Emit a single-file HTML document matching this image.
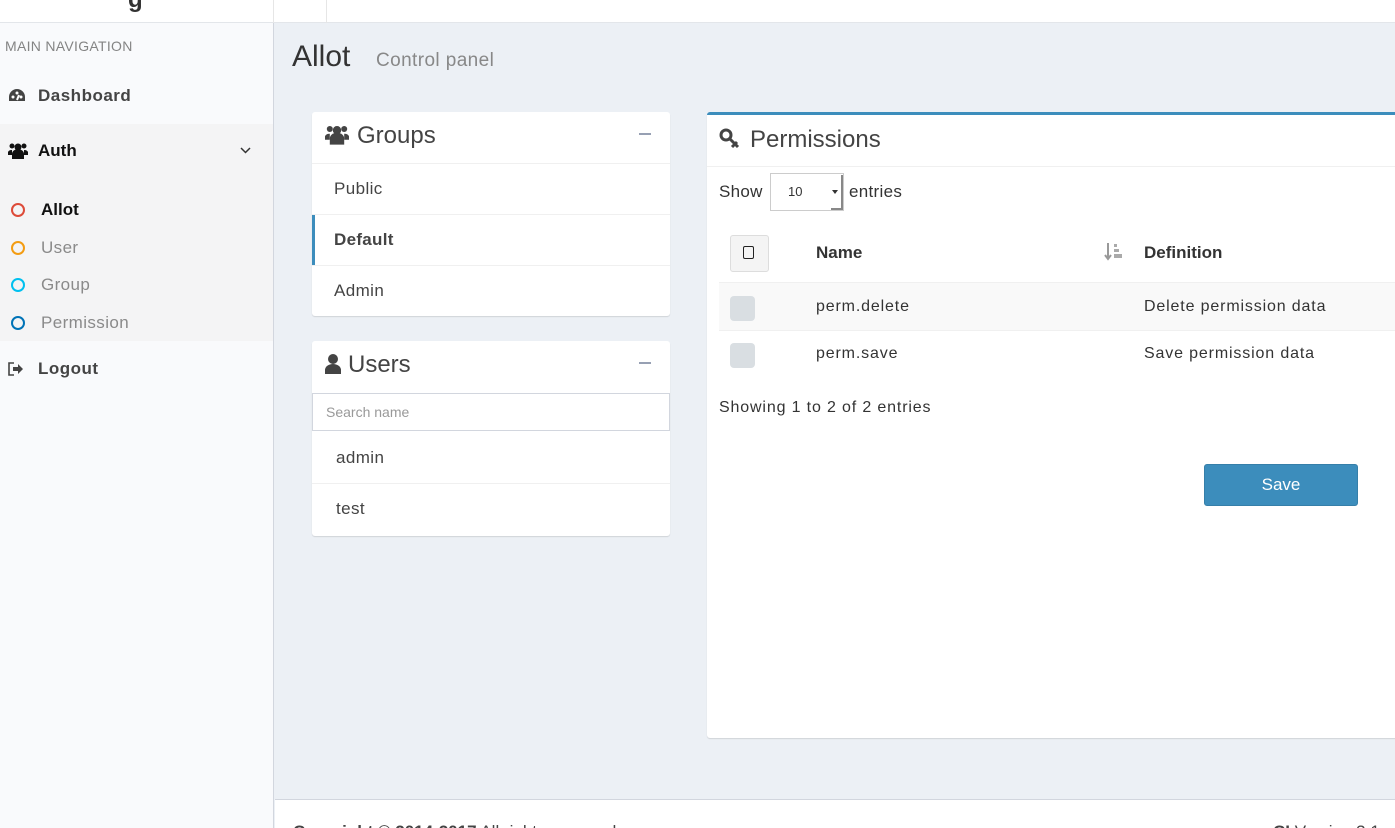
<!DOCTYPE html>
<html style="height:828px;overflow:hidden"><head><style>
*{box-sizing:border-box;margin:0;padding:0}
html{width:1395px;height:828px;overflow:hidden}
body{width:1395px;height:828px;overflow:hidden;font-family:"Liberation Sans",sans-serif;background:#ecf0f5;position:relative;color:#333}
.a{position:absolute}
.hdr{left:0;top:0;width:1395px;height:23px;background:#fff;border-bottom:1px solid #e3e6ea}
.side{left:0;top:23px;width:274px;height:805px;background:#f9fafc;border-right:1px solid #d2d6de}
.box{background:#fff;border-radius:3px;box-shadow:0 1px 1px rgba(0,0,0,.12)}
.circ{width:14px;height:14px;border-radius:50%;border:2px solid}
.t{letter-spacing:.85px}
</style></head><body>
<div class="a hdr"></div>
<div class="a" style="left:273px;top:0;width:1px;height:23px;background:#e6e6e6"></div>
<div class="a" style="left:326px;top:0;width:1px;height:23px;background:#e6e6e6"></div>
<div class="a" style="left:128px;top:-14px;font-size:24px;font-weight:bold;color:#333">g</div>
<div class="a side"></div>
<div class="a" style="left:5px;top:38px;font-size:14px;color:#848484;letter-spacing:.3px">MAIN NAVIGATION</div>
<svg class="a" style="left:8px;top:88px" width="18" height="16" viewBox="0 0 18 16"><path d="M9 1A8 8 0 0 0 1 9v4h16V9A8 8 0 0 0 9 1z" fill="#444"/><circle cx="5" cy="9" r="1.5" fill="#fff"/><circle cx="9" cy="5" r="1.5" fill="#fff"/><circle cx="13" cy="9" r="1.5" fill="#fff"/><path d="M9 12l2-5" stroke="#fff" stroke-width="2"/></svg>
<div class="a" style="left:38px;top:86px;font-size:17px;font-weight:bold;color:#444;letter-spacing:.5px">Dashboard</div>
<div class="a" style="left:0;top:124px;width:273px;height:217px;background:#f4f4f5"></div>
<svg class="a" style="left:8px;top:142px" width="20" height="18" viewBox="0 0 20 18"><circle cx="10" cy="5" r="3.5" fill="#111"/><circle cx="4" cy="4" r="2.5" fill="#111"/><circle cx="16" cy="4" r="2.5" fill="#111"/><path d="M4 17v-5a6 5 0 0 1 12 0v5z" fill="#111"/><path d="M0 13v-3a4 3 0 0 1 4-2v5zM20 13v-3a4 3 0 0 0-4-2v5z" fill="#111"/></svg>
<div class="a" style="left:38px;top:141px;font-size:17px;font-weight:bold;color:#111">Auth</div>
<svg class="a" style="left:240px;top:147px" width="11" height="8"><path d="M1 1l4.5 4.5L10 1" stroke="#333" stroke-width="1.5" fill="none"/></svg>
<div class="a circ" style="left:11px;top:203px;border-color:#dd4b39"></div>
<div class="a" style="left:41px;top:200px;font-size:17px;font-weight:bold;color:#111">Allot</div>
<div class="a circ" style="left:11px;top:241px;border-color:#f39c12"></div>
<div class="a" style="left:41px;top:238px;font-size:17px;color:#8a8a8a;letter-spacing:.4px">User</div>
<div class="a circ" style="left:11px;top:278px;border-color:#00c0ef"></div>
<div class="a" style="left:41px;top:275px;font-size:17px;color:#8a8a8a;letter-spacing:.4px">Group</div>
<div class="a circ" style="left:11px;top:316px;border-color:#0073b7"></div>
<div class="a" style="left:41px;top:313px;font-size:17px;color:#8a8a8a;letter-spacing:.4px">Permission</div>
<svg class="a" style="left:8px;top:362px" width="16" height="14" viewBox="0 0 16 14"><path d="M6 1H1v12h5" stroke="#444" stroke-width="1.6" fill="none"/><path d="M5 5h5V2l5 5-5 5V9H5z" fill="#444"/></svg>
<div class="a" style="left:38px;top:359px;font-size:17px;font-weight:bold;color:#444;letter-spacing:.5px">Logout</div>

<div class="a" style="left:292px;top:40px;font-size:30px;color:#333">Allot</div>
<div class="a" style="left:376px;top:50px;font-size:19px;color:#888;letter-spacing:.4px">Control panel</div>

<div class="a box" style="left:312px;top:112px;width:358px;height:204px"></div>
<svg class="a" style="left:325px;top:124px" width="24" height="22" viewBox="0 0 20 18"><circle cx="10" cy="5" r="3.5" fill="#444"/><circle cx="4" cy="4" r="2.5" fill="#444"/><circle cx="16" cy="4" r="2.5" fill="#444"/><path d="M4 17v-5a6 5 0 0 1 12 0v5z" fill="#444"/><path d="M0 13v-3a4 3 0 0 1 4-2v5zM20 13v-3a4 3 0 0 0-4-2v5z" fill="#444"/></svg>
<div class="a" style="left:357px;top:122px;font-size:24px;color:#444">Groups</div>
<div class="a" style="left:639px;top:133px;width:12px;height:2px;background:#97a0b3"></div>
<div class="a" style="left:312px;top:163px;width:358px;height:1px;background:#f0f0f0"></div>
<div class="a" style="left:334px;top:179px;font-size:17px;color:#444;letter-spacing:.4px">Public</div>
<div class="a" style="left:312px;top:214px;width:358px;height:1px;background:#f0f0f0"></div>
<div class="a" style="left:312px;top:215px;width:3px;height:50px;background:#3c8dbc"></div>
<div class="a" style="left:334px;top:230px;font-size:17px;font-weight:bold;color:#444;letter-spacing:.3px">Default</div>
<div class="a" style="left:312px;top:265px;width:358px;height:1px;background:#f0f0f0"></div>
<div class="a" style="left:334px;top:281px;font-size:17px;color:#444;letter-spacing:.4px">Admin</div>

<div class="a box" style="left:312px;top:341px;width:358px;height:195px"></div>
<svg class="a" style="left:325px;top:353px" width="16" height="22" viewBox="0 0 16 22"><circle cx="8" cy="6" r="5" fill="#444"/><path d="M0 21v-4a8 6 0 0 1 16 0v4z" fill="#444"/></svg>
<div class="a" style="left:348px;top:351px;font-size:24px;color:#444">Users</div>
<div class="a" style="left:639px;top:362px;width:12px;height:2px;background:#97a0b3"></div>
<div class="a" style="left:312px;top:393px;width:358px;height:38px;border:1px solid #d2d6de;background:#fff"></div>
<div class="a" style="left:326px;top:404px;font-size:14px;color:#999">Search name</div>
<div class="a" style="left:336px;top:448px;font-size:17px;color:#444;letter-spacing:.4px">admin</div>
<div class="a" style="left:312px;top:483px;width:358px;height:1px;background:#f0f0f0"></div>
<div class="a" style="left:336px;top:499px;font-size:17px;color:#444;letter-spacing:.4px">test</div>

<div class="a box" style="left:707px;top:112px;width:700px;height:626px;border-top:3px solid #3c8dbc"></div>
<svg class="a" style="left:719px;top:128px" width="22" height="22" viewBox="0 0 22 22"><circle cx="7" cy="7" r="5" stroke="#444" stroke-width="3" fill="none"/><path d="M10 10l9 9M16 16l-3 3M18 14l-2 2" stroke="#444" stroke-width="3"/></svg>
<div class="a" style="left:750px;top:126px;font-size:24px;color:#444">Permissions</div>
<div class="a" style="left:707px;top:166px;width:688px;height:1px;background:#f0f0f0"></div>
<div class="a" style="left:719px;top:182px;font-size:17px;color:#333;letter-spacing:.3px">Show</div>
<div class="a" style="left:770px;top:173px;width:74px;height:38px;border:1px solid #ccc;background:#fff"></div>
<div class="a" style="left:788px;top:184px;font-size:13px;color:#333">10</div>
<div class="a" style="left:841px;top:175px;width:2px;height:35px;background:#888"></div>
<div class="a" style="left:831px;top:208px;width:12px;height:2px;background:#888"></div>
<div class="a" style="left:832px;top:190px;border:3px solid transparent;border-top:4px solid #333"></div>
<div class="a" style="left:849px;top:182px;font-size:17px;color:#333;letter-spacing:.3px">entries</div>
<div class="a" style="left:730px;top:235px;width:39px;height:37px;background:#f4f4f4;border:1px solid #ddd;border-radius:3px"></div>
<div class="a" style="left:743px;top:246px;width:11px;height:13px;border:1.5px solid #222;border-radius:2px"></div>
<div class="a" style="left:816px;top:243px;font-size:17px;font-weight:bold;color:#333">Name</div>
<svg class="a" style="left:1104px;top:242px" width="22" height="20"><path d="M4 1v15M1 13l3 4 3-4" stroke="#999" stroke-width="2" fill="none"/><rect x="10" y="2" width="3" height="3" fill="#aaa"/><rect x="10" y="7" width="5" height="3" fill="#aaa"/><rect x="10" y="12" width="8" height="4" fill="#aaa"/></svg>
<div class="a" style="left:1144px;top:243px;font-size:17px;font-weight:bold;color:#333">Definition</div>
<div class="a" style="left:719px;top:282px;width:676px;height:49px;background:#f9f9f9;border-top:1px solid #f0f0f0;border-bottom:1px solid #f0f0f0"></div>
<div class="a" style="left:730px;top:296px;width:25px;height:25px;background:#d9dee2;border-radius:4px"></div>
<div class="a t" style="left:816px;top:298px;font-size:16px;color:#333">perm.delete</div>
<div class="a t" style="left:1144px;top:298px;font-size:16px;color:#333">Delete permission data</div>
<div class="a" style="left:730px;top:343px;width:25px;height:25px;background:#d9dee2;border-radius:4px"></div>
<div class="a t" style="left:816px;top:345px;font-size:16px;color:#333">perm.save</div>
<div class="a t" style="left:1144px;top:345px;font-size:16px;color:#333">Save permission data</div>
<div class="a t" style="left:719px;top:399px;font-size:16px;color:#333">Showing 1 to 2 of 2 entries</div>
<div class="a" style="left:1204px;top:464px;width:154px;height:42px;background:#3c8dbc;border:1px solid #367fa9;border-radius:3px;color:#fff;font-size:17px;text-align:center;line-height:40px">Save</div>

<div class="a" style="left:275px;top:799px;width:1120px;height:29px;background:#fff;border-top:1px solid #d2d6de;overflow:hidden">
<div class="a" style="left:18px;top:22px;font-size:17px;color:#444;white-space:nowrap"><b>Copyright © 2014-2017</b> All rights reserved.</div>
<div class="a" style="left:998px;top:22px;font-size:17px;color:#444;white-space:nowrap"><b>CI</b> Version 3.1</div>
</div>
</body></html>
